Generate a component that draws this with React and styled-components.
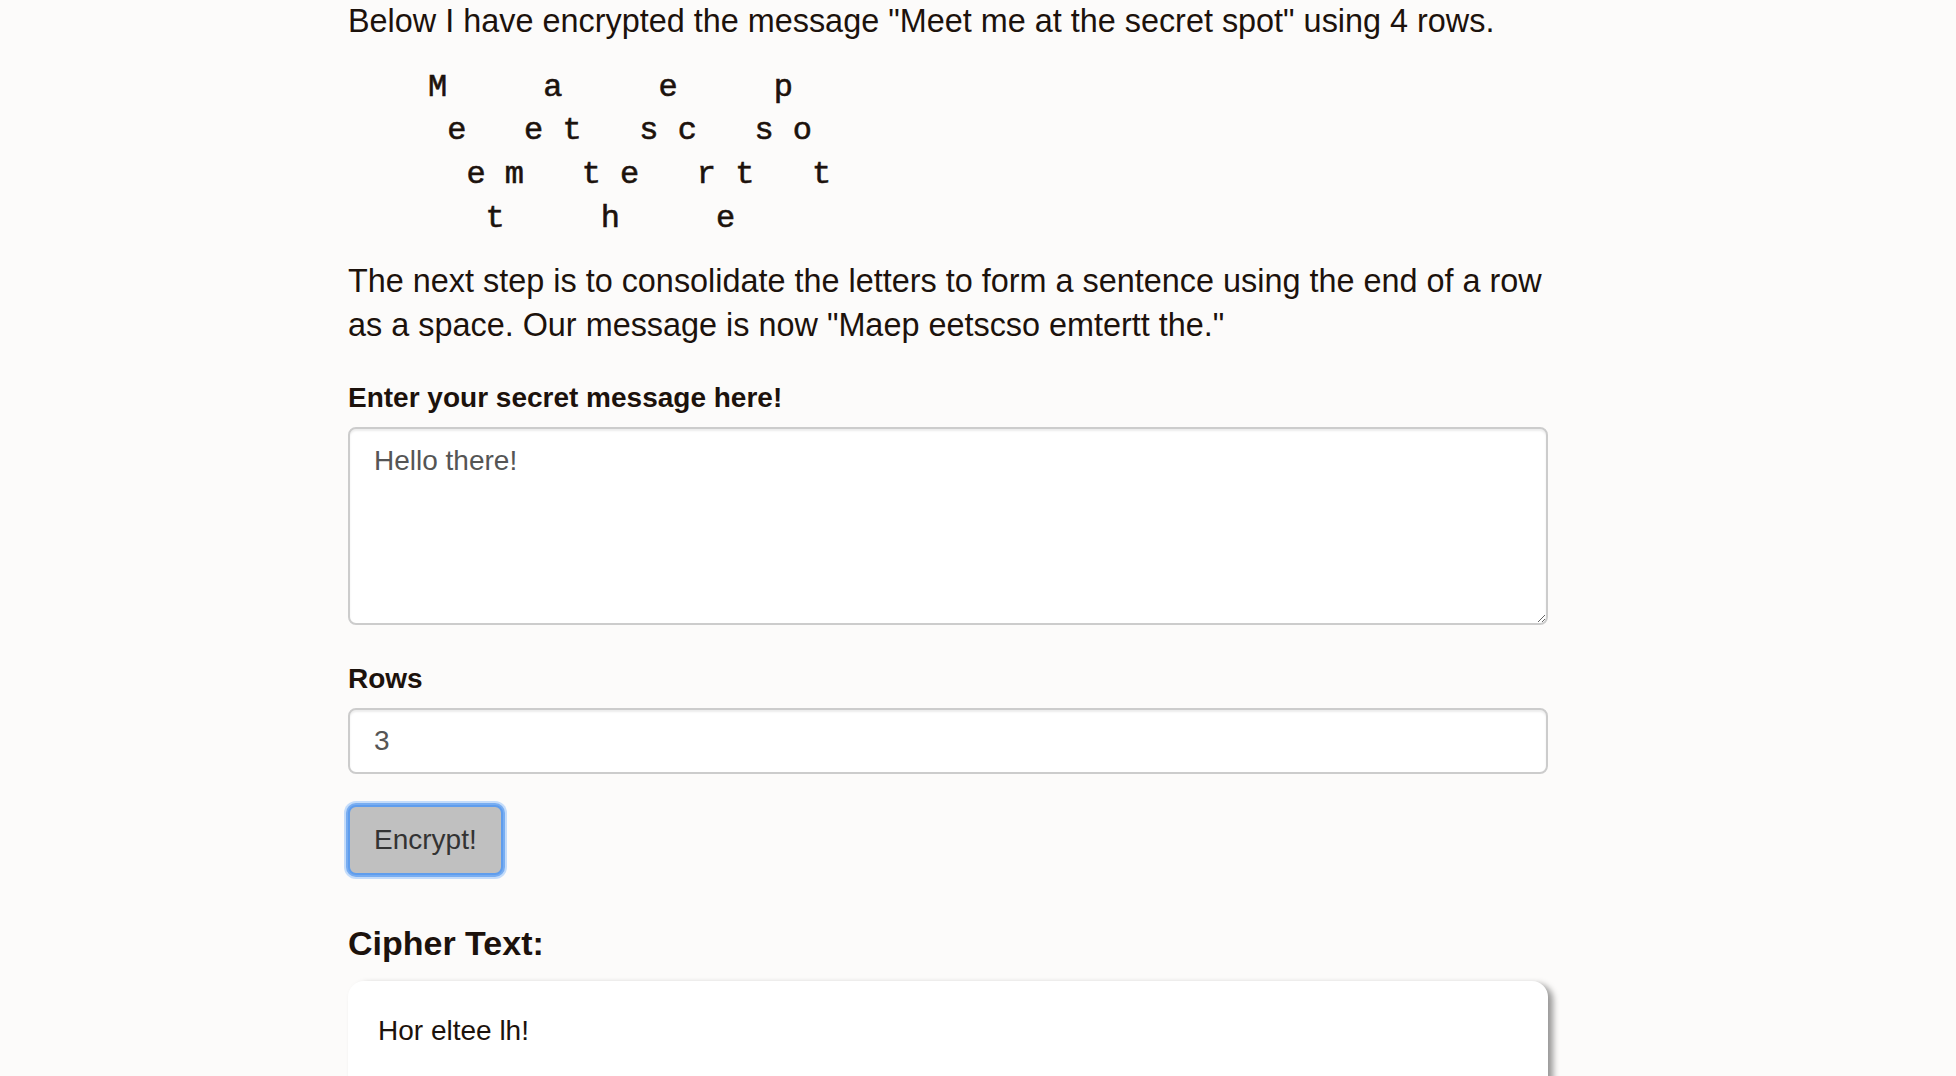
import React from "react";
import styled, { createGlobalStyle } from "styled-components";

const Global = createGlobalStyle`
  html, body {
    margin: 0;
    padding: 0;
    background: #fcfbfa;
  }
  body {
    font-family: "Liberation Sans", Arial, Helvetica, sans-serif;
    color: #1c120c;
    overflow: hidden;
  }
  * { box-sizing: border-box; }
`;

const Page = styled.main`
  width: 1200px;
  margin: 0 0 0 348px;
`;

const Paragraph = styled.p`
  margin: ${(p) => p.$top || 0}px 0 ${(p) => p.$bottom || 0}px 0;
  font-size: 32.4px;
  line-height: 43.7px;
`;

const Zigzag = styled.div`
  margin: 0 0 19.5px 80px;
  font-family: "Liberation Mono", "Courier New", monospace;
  font-size: 32px;
  line-height: 43.7px;
  white-space: pre;
  color: #1c120c;
  -webkit-text-stroke: 0.6px #1c120c;
`;

const FormGroup = styled.div`
  display: flex;
  flex-direction: column;
  margin-bottom: ${(p) => p.$gap}px;
`;

const Label = styled.label`
  display: block;
  font-size: 28px;
  line-height: 40px;
  font-weight: 700;
  margin-bottom: 9px;
`;

const TextArea = styled.textarea`
  display: block;
  width: 100%;
  height: 198px;
  padding: 12px 24px;
  font-family: "Liberation Sans", Arial, sans-serif;
  font-size: 28px;
  line-height: 40px;
  color: #555;
  background: #fff;
  border: 2px solid #ccc;
  border-radius: 8px;
  box-shadow: inset 0 2px 2px rgba(0, 0, 0, 0.075);
  resize: vertical;
  outline: none;
`;

const Input = styled.input`
  display: block;
  width: 100%;
  height: 66px;
  padding: 12px 24px;
  font-family: "Liberation Sans", Arial, sans-serif;
  font-size: 28px;
  color: #555;
  background: #fff;
  border: 2px solid #ccc;
  border-radius: 8px;
  box-shadow: inset 0 2px 2px rgba(0, 0, 0, 0.075);
  outline: none;
`;

const Button = styled.button`
  display: block;
  height: 70px;
  padding: 0 24px;
  font-family: "Liberation Sans", Arial, sans-serif;
  font-size: 28px;
  color: #333;
  background: #c0c0c0;
  border: 2px solid #5f9ded;
  border-radius: 8px;
  box-shadow: 0 0 0 2px #78adf1, 0 0 0 4px rgba(150, 195, 250, 0.55);
  cursor: pointer;
`;

const Heading = styled.h3`
  margin: 49px 0 19.5px 0;
  font-size: 34px;
  line-height: 38px;
  font-weight: 700;
  color: #1c120c;
`;

const Card = styled.div`
  background: #fff;
  border-radius: 16px;
  padding: 30px;
  font-size: 28px;
  line-height: 40px;
  color: #1c120c;
  box-shadow: 5px 3px 6px rgba(0, 0, 0, 0.4);
  min-height: 130px;
`;

const rows = [
  "M     a     e     p",
  " e   e t   s c   s o",
  "  e m   t e   r t   t",
  "   t     h     e",
];

export default function App() {
  return (
    <>
      <Global />
      <Page>
        <Paragraph $top={0} $bottom={22}>
          Below I have encrypted the message "Meet me at the secret spot" using 4 rows.
        </Paragraph>
        <Zigzag>{rows.join("\n")}</Zigzag>
        <Paragraph $bottom={30.5}>
          The next step is to consolidate the letters to form a sentence using the end of a row
          as a space. Our message is now "Maep eetscso emtertt the."
        </Paragraph>
        <FormGroup $gap={34}>
          <Label htmlFor="msg">Enter your secret message here!</Label>
          <TextArea id="msg" defaultValue="Hello there!" />
        </FormGroup>
        <FormGroup $gap={31}>
          <Label htmlFor="rows">Rows</Label>
          <Input id="rows" type="text" defaultValue="3" />
        </FormGroup>
        <Button type="button">Encrypt!</Button>
        <Heading>Cipher Text:</Heading>
        <Card>Hor eltee lh!</Card>
      </Page>
    </>
  );
}
